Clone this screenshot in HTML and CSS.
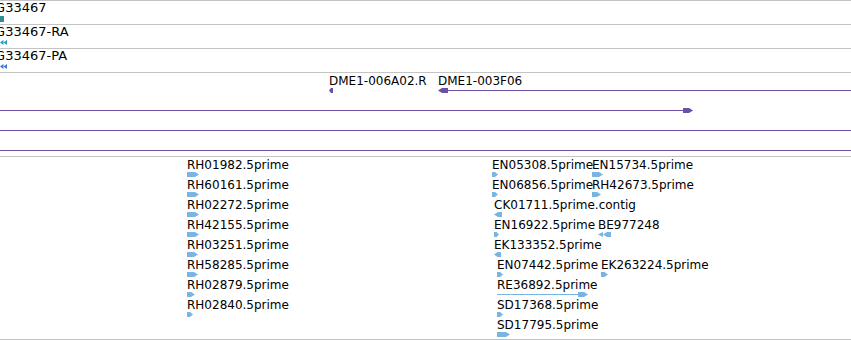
FILE: index.html
```html
<!DOCTYPE html>
<html lang="en">
<head>
    <meta charset="UTF-8">
    <meta name="viewport" content="width=device-width, initial-scale=1.0">
    <title>Gene Tracks</title>
    <link rel="stylesheet" href="styles.css">
</head>
<body>
    <div class="panel">
        <div class="track track-gene" id="trackGene"></div>
        <div class="track track-tx" id="trackRna"></div>
        <div class="track track-tx" id="trackPep"></div>
        <div class="track track-dna" id="trackDna"></div>
        <div class="track track-est" id="trackEst"></div>
    </div>

    <script>
        const SVG = 'http://www.w3.org/2000/svg';

        // glyph shapes, all 5px tall
        function glyphShapes(f) {
            const w = f.w;
            const h = 5;
            if (f.g === 'box') {
                return [`<rect x="0" y="0" width="${w}" height="6"/>`];
            }
            if (f.g === 'ls') {
                return [`<polygon points="0,2.5 3.5,0 3.5,5"/>`, `<polygon points="3.5,2.5 7,0 7,5"/>`];
            }
            if (f.g === 'll') {
                return [`<polygon points="0,2.5 5,0 5,5"/>`, `<polygon points="5,2.5 9,0 ${w},0 ${w},5 9,5"/>`];
            }
            const head = Math.min(4, w / 2);
            const block = f.line ? 10 : w;
            if (f.g === 'r') {
                const x0 = w - block;
                const out = [`<polygon points="${x0},0 ${w - head},0 ${w},2.5 ${w - head},${h} ${x0},${h}"/>`];
                if (f.line) out.push(`<line x1="0" y1="2.5" x2="${x0}" y2="2.5"/>`);
                return out;
            }
            const out = [`<polygon points="0,2.5 ${head},0 ${block},0 ${block},${h} ${head},${h}"/>`];
            if (f.line) out.push(`<line x1="${block}" y1="2.5" x2="${w}" y2="2.5"/>`);
            return out;
        }

        function drawTrack(id, features, offset) {
            const track = document.getElementById(id);
            features.forEach(f => {
                const el = document.createElement('div');
                el.className = 'feature';
                el.style.left = f.x + 'px';
                el.style.top = (offset + f.r * 20) + 'px';

                const label = document.createElement('span');
                label.className = 'label';
                label.textContent = f.label || '';
                el.appendChild(label);

                const svg = document.createElementNS(SVG, 'svg');
                svg.setAttribute('class', 'glyph ' + (f.c || ''));
                svg.setAttribute('width', f.w);
                svg.setAttribute('height', 6);
                if (f.gx) svg.style.marginLeft = f.gx + 'px';
                svg.innerHTML = glyphShapes(f).join('');
                el.appendChild(svg);

                track.appendChild(el);
            });
        }

        drawTrack('trackGene', [
            { x: -14, r: 0, label: 'CG33467', g: 'box', w: 18, c: 'teal' }
        ], 1);
        drawTrack('trackRna', [
            { x: -14, r: 0, label: 'CG33467-RA', g: 'ls', w: 7, gx: 14, c: 'cyan' }
        ], 1);
        drawTrack('trackPep', [
            { x: -14, r: 0, label: 'CG33467-PA', g: 'ls', w: 7, gx: 14, c: 'blue' }
        ], 1);

        drawTrack('trackDna', [
            { x: 329, r: 0, label: 'DME1-006A02.R', g: 'l', w: 4 },
            { x: 438, r: 0, label: 'DME1-003F06', g: 'l', w: 460, line: true },
            { x: -20, r: 1, g: 'r', w: 713, line: true },
            { x: -20, r: 2, g: 'r', w: 900, line: true },
            { x: -20, r: 3, g: 'r', w: 900, line: true }
        ], 3);

        drawTrack('trackEst', [
            { x: 187, r: 0, label: 'RH01982.5prime', g: 'r', w: 12 },
            { x: 187, r: 1, label: 'RH60161.5prime', g: 'r', w: 12 },
            { x: 187, r: 2, label: 'RH02272.5prime', g: 'r', w: 12 },
            { x: 187, r: 3, label: 'RH42155.5prime', g: 'r', w: 12 },
            { x: 187, r: 4, label: 'RH03251.5prime', g: 'r', w: 11 },
            { x: 187, r: 5, label: 'RH58285.5prime', g: 'r', w: 11 },
            { x: 187, r: 6, label: 'RH02879.5prime', g: 'r', w: 8 },
            { x: 187, r: 7, label: 'RH02840.5prime', g: 'r', w: 6 },
            { x: 492, r: 0, label: 'EN05308.5prime', g: 'r', w: 6 },
            { x: 492, r: 1, label: 'EN06856.5prime', g: 'r', w: 6 },
            { x: 494, r: 2, label: 'CK01711.5prime.contig', g: 'l', w: 8 },
            { x: 494, r: 3, label: 'EN16922.5prime', g: 'r', w: 5 },
            { x: 494, r: 4, label: 'EK133352.5prime', g: 'l', w: 7 },
            { x: 497, r: 5, label: 'EN07442.5prime', g: 'r', w: 6 },
            { x: 497, r: 6, label: 'RE36892.5prime', g: 'r', w: 91, line: true },
            { x: 497, r: 7, label: 'SD17368.5prime', g: 'r', w: 6 },
            { x: 497, r: 8, label: 'SD17795.5prime', g: 'r', w: 13 },
            { x: 592, r: 0, label: 'EN15734.5prime', g: 'r', w: 11 },
            { x: 592, r: 1, label: 'RH42673.5prime', g: 'r', w: 9 },
            { x: 598, r: 3, label: 'BE977248', g: 'll', w: 13 },
            { x: 601, r: 5, label: 'EK263224.5prime', g: 'r', w: 7 }
        ], 3);
    </script>
</body>
</html>
```

FILE: styles.css
```css
body {
    margin: 0;
    padding: 0;
    background: #fff;
    font-family: "DejaVu Sans", Verdana, sans-serif;
    font-size: 12px;
    color: #000;
    overflow: hidden;
}

.panel {
    width: 851px;
    border-top: 1px solid #c4c4c4;
}

.track {
    position: relative;
    overflow: hidden;
    border-bottom: 1px solid #c4c4c4;
}

.track-gene,
.track-tx {
    height: 23px;
    font-size: 13px;
}

.track-dna {
    height: 83px;
}

.track-est {
    height: 182px;
}

.feature {
    position: absolute;
    white-space: nowrap;
}

.label {
    display: block;
    line-height: 12px;
    height: 12px;
}

.track-dna .label,
.track-est .label {
    line-height: 10px;
}

.glyph {
    display: block;
    overflow: visible;
    fill: #6c4fa6;
    stroke: none;
}

.glyph line {
    stroke: #6c4fa6;
    stroke-width: 1;
}

.track-gene .glyph {
    margin-top: 2px;
}

.track-tx .glyph {
    margin-top: 2px;
}

.track-est .glyph {
    fill: #7ab4e2;
}

.track-est .glyph line {
    stroke: #7ab4e2;
}

.glyph.teal {
    fill: #2e8c92;
}

.glyph.cyan {
    fill: #1c9ec6;
}

.glyph.blue {
    fill: #3a7ad2;
}
```
